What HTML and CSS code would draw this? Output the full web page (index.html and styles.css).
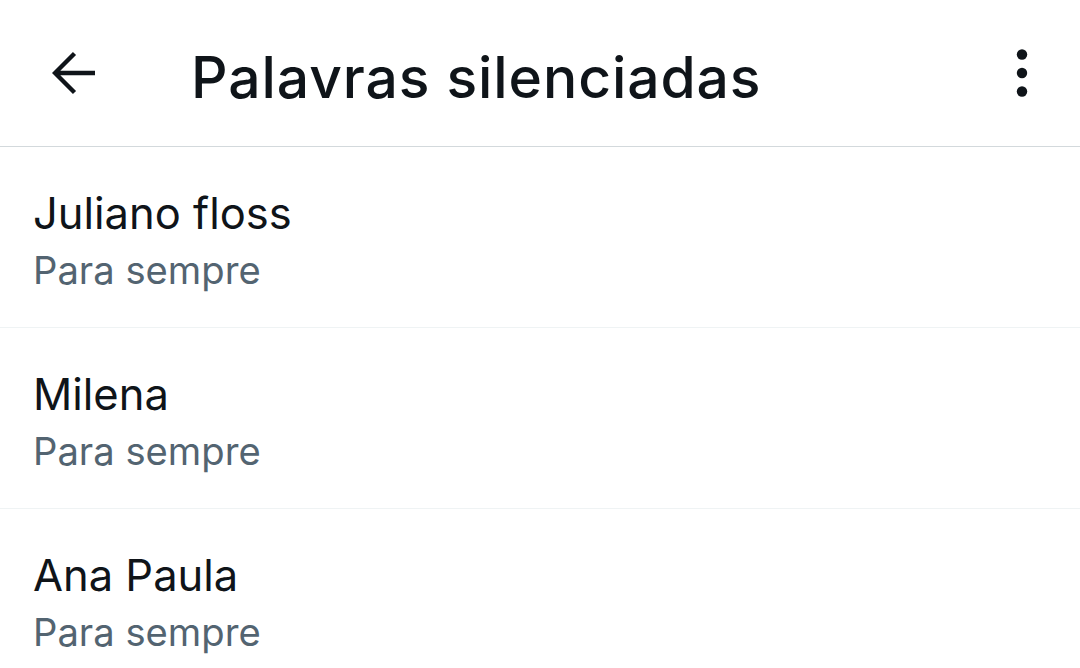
FILE: index.html
```html
<!DOCTYPE html>
<html>
<head lang="pt">
    <meta charset="UTF-8">
    <title>Palavras silenciadas</title>
    <link rel="stylesheet" href="styles.css">
</head>
<body>
<div class="header">
    <a href="#" class="back">
        <svg width="46" height="46" viewBox="0 0 46 46">
            <path d="M43 23H4M22.5 3.5L3 23l19.5 19.5" fill="none" stroke="#0f1419" stroke-width="4.4"/>
        </svg>
    </a>
    <h1 class="title">Palavras silenciadas</h1>
    <a href="#" class="more">
        <svg width="16" height="50" viewBox="0 0 16 50">
            <circle cx="8" cy="6.5" r="5.2" fill="#0f1419"/>
            <circle cx="8" cy="25" r="5.2" fill="#0f1419"/>
            <circle cx="8" cy="43.5" r="5.2" fill="#0f1419"/>
        </svg>
    </a>
</div>
<ul class="list">
    <li class="item">
        <div class="name">Juliano floss</div>
        <div class="sub">Para sempre</div>
    </li>
    <li class="item">
        <div class="name">Milena</div>
        <div class="sub">Para sempre</div>
    </li>
    <li class="item">
        <div class="name">Ana Paula</div>
        <div class="sub">Para sempre</div>
    </li>
</ul>
</body>
</html>
```

FILE: styles.css
```css
body, ul, li, div, h1 {
    margin: 0;
    padding: 0;
}

body {
    font-family: Inter, "Liberation Sans", sans-serif;
    background: #fff;
    color: #0f1419;
}

li {
    list-style: none;
}

.header {
    display: flex;
    align-items: center;
    height: 146px;
    border-bottom: 1px solid #d3d9dc;
    padding-left: 52px;
    padding-right: 50px;
}

.back {
    display: flex;
    width: 46px;
    height: 46px;
}

.title {
    flex: 1;
    margin-left: 93px;
    padding-top: 8px;
    font-size: 57px;
    font-weight: 500;
    letter-spacing: 0.9px;
}

.more {
    display: flex;
}

.item {
    padding: 37px 33px 29px;
    border-bottom: 1px solid #eff3f4;
}

.name {
    font-size: 43.5px;
    line-height: 58px;
}

.sub {
    font-size: 38.2px;
    line-height: 56px;
    color: #536471;
}
```
